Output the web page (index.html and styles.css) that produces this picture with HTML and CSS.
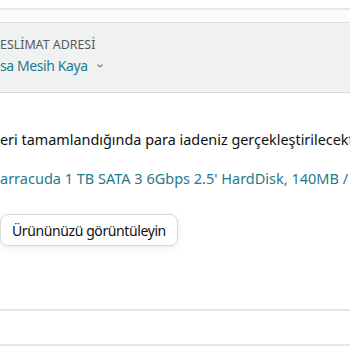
FILE: index.html
```html
<!DOCTYPE html>
<html>
<head>
<meta charset="utf-8">
<link rel="stylesheet" href="styles.css">
</head>
<body>
<div class="page">
  <div class="top-gap"></div>
  <div class="strip"></div>
  <section class="address">
    <div class="label">ESLİMAT ADRESİ</div>
    <div class="name"><span>sa Mesih Kaya</span><svg class="chev" width="8" height="6" viewBox="0 0 8 6"><path d="M1.5 1.5 L4 4 L6.5 1.5" fill="none" stroke="#7a7e7e" stroke-width="1.1"/></svg></div>
  </section>
  <section class="content">
    <p class="info">eri tamamlandığında para iadeniz gerçekleştirilecektir.</p>
    <p class="product">arracuda 1 TB SATA 3 6Gbps 2.5' HardDisk, 140MB / s</p>
    <button class="btn">Ürününüzü görüntüleyin</button>
  </section>
  <div class="rule"></div>
  <div class="blank"></div>
  <div class="rule"></div>
</div>
</body>
</html>
```
FILE: styles.css
```css
html, body {
  margin: 0;
  padding: 0;
  background: #ffffff;
  overflow: hidden;
}
.page {
  width: 350px;
  font-family: "Noto Sans", "Open Sans", sans-serif;
  white-space: nowrap;
  overflow: hidden;
}
.top-gap {
  height: 8px;
}
.strip {
  height: 12px;
  background: #fafbfb;
  border-top: 2px solid #e6e8e8;
  border-bottom: 1px solid #dcdfdf;
}
.address {
  background: #f0f2f2;
  border-bottom: 1px solid #d5d9d9;
  padding-top: 14px;
  box-sizing: border-box;
  height: 70px;
}
.label {
  font-size: 12.4px;
  line-height: 16px;
  color: #565959;
}
.name {
  margin-top: 3px;
  font-size: 14px;
  letter-spacing: -0.4px;
  line-height: 20px;
  color: #1f7a8c;
  display: flex;
  align-items: center;
  gap: 8px;
}
.content {
  padding-top: 37px;
  height: 216px;
  box-sizing: border-box;
}
.info {
  margin: 0;
  font-size: 14.4px;
  line-height: 20px;
  color: #0f1111;
}
.product {
  margin: 18px 0 0;
  font-size: 14.5px;
  line-height: 20px;
  color: #1f7a8c;
}
.btn {
  display: block;
  margin-top: 26px;
  margin-left: 0;
  height: 32px;
  padding: 0 11px;
  font-family: inherit;
  font-size: 14px;
  letter-spacing: -0.4px;
  color: #0f1111;
  background: #ffffff;
  border: 1px solid #d5d9d9;
  border-radius: 8px;
  box-shadow: 0 2px 5px rgba(213, 217, 217, 0.5);
}
.rule {
  height: 0;
  border-top: 2px solid #e3e6e6;
}
.blank {
  height: 33px;
}
```
